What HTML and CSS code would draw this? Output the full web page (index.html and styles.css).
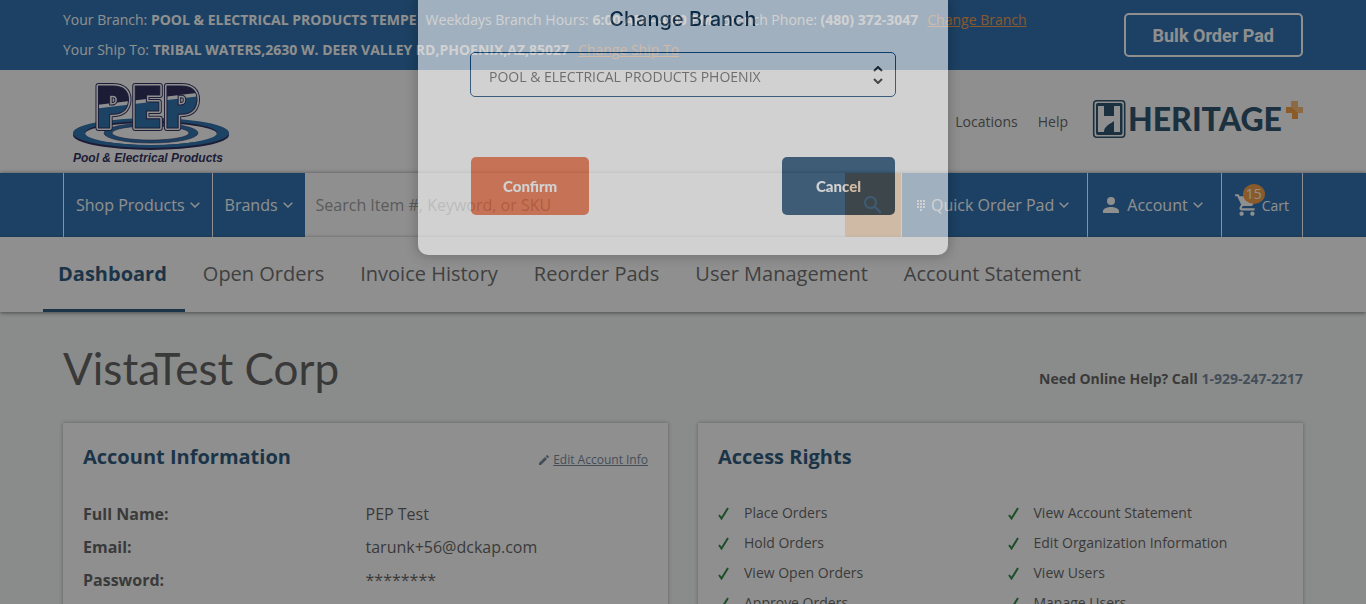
FILE: index.html
```html
<!DOCTYPE html>
<html lang="en">
<head>
<meta charset="utf-8">
<meta name="viewport" content="width=device-width, initial-scale=1">
<title>Dashboard</title>
<link rel="stylesheet" href="styles.css">
</head>
<body>
<div class="page">
  <div class="topbar">
    <div class="container topbar-inner">
      <div class="branch-info">
        <p class="info-row"><span>Your Branch: <strong>POOL &amp; ELECTRICAL PRODUCTS TEMPE</strong></span><span>Weekdays Branch Hours: <strong>6:00 AM - 4:00 PM</strong></span><span>Branch Phone: <strong>(480) 372-3047</strong></span><a href="#">Change Branch</a></p>
        <p class="info-row"><span>Your Ship To: <strong>TRIBAL WATERS,2630 W. DEER VALLEY RD,PHOENIX,AZ,85027</strong></span><a href="#">Change Ship To</a></p>
      </div>
      <button class="bulk" type="button">Bulk Order Pad</button>
    </div>
  </div>

  <header class="header">
    <div class="container header-inner">
      <a class="logo" href="#" aria-label="Pool &amp; Electrical Products">
        <svg width="160" height="90" viewBox="0 0 160 90">
          <defs>
            <linearGradient id="pep" gradientUnits="userSpaceOnUse" x1="60" y1="0" x2="66" y2="50">
              <stop offset="0.46" stop-color="#00003c"/><stop offset="0.48" stop-color="#fff"/>
              <stop offset="0.53" stop-color="#fff"/><stop offset="0.55" stop-color="#0054a0"/>
            </linearGradient>
          </defs>
          <path fill-rule="evenodd" fill="#00003c" d="M2 58a78 15 0 1 0 156 0a78 15 0 1 0-156 0zM14 57a66 11 0 1 0 132 0a66 11 0 1 0-132 0z"/>
          <path fill-rule="evenodd" fill="#0054a0" d="M2 56a78 15 0 1 0 156 0a78 15 0 1 0-156 0zM14 56a66 12 0 1 0 132 0a66 12 0 1 0-132 0z"/>
          <path fill-rule="evenodd" fill="#0054a0" stroke="#00003c" stroke-width="0.6" d="M33 56a47 10 0 1 0 94 0a47 10 0 1 0-94 0zM41 56a38 7 0 1 0 77 0a38 7 0 1 0-77 0z"/>
          <text class="pep-outer" x="23" y="51">PEP</text>
          <text class="pep-mid" x="23" y="51">PEP</text>
          <text class="pep-inner" x="23" y="51">PEP</text>
          <text class="pep-tag" x="2" y="85">Pool &amp; Electrical Products</text>
        </svg>
      </a>
      <nav class="header-links">
        <a href="#">Locations</a>
        <a href="#">Help</a>
        <a class="heritage" href="#" aria-label="Heritage Plus">
          <svg width="210" height="40" viewBox="0 0 210 40">
            <rect x="0.7" y="0.7" width="31" height="36.600" rx="3" fill="#fff" stroke="#003050" stroke-width="1.6"/>
            <rect x="3" y="3" width="26.500" height="32" rx="2" fill="#003050"/>
            <path fill="#fff" d="M5 6h6v10h10V6h6v26h-6V22c-4 1-8 4-9 10H5z"/>
            <path fill="#003050" d="M11 32c0-3 1-4 2-5c2-3 5-3 8-6v11z"/>
            <text class="heritage-text" x="35" y="31">HERITAGE</text>
            <path fill="#f3891c" d="M198 1h7v6h5v6h-5v6h-6v-6h-6V7h5z"/>
            <path fill="#fabd74" opacity="0.7" d="M198 1h7v6h5v6h-5l-7-6z"/>
          </svg>
        </a>
      </nav>
    </div>
  </header>

  <div class="navbar">
    <div class="container nav-inner">
      <a class="nav-item" href="#">Shop Products <svg class="chev" viewBox="0 0 10 7"><path d="M.7 1.200l4.300 4.300 4.300-4.300"/></svg></a>
      <a class="nav-item" href="#">Brands <svg class="chev" viewBox="0 0 10 7"><path d="M.7 1.200l4.300 4.300 4.300-4.300"/></svg></a>
      <form class="search">
        <input type="text" aria-label="Search" placeholder="Search Item #, Keyword, or SKU">
        <button type="button" aria-label="Search"><svg width="24" height="24" viewBox="0 0 24 24"><path fill="#fff" d="M15.500 14h-.79l-.28-.27A6.470 6.470 0 0 0 16 9.500 6.500 6.500 0 1 0 9.500 16c1.610 0 3.090-.59 4.230-1.570l.27.28v.79l5 4.990L20.490 19l-4.990-5zm-6 0C7.010 14 5 11.990 5 9.500S7.010 5 9.500 5 14 7.010 14 9.500 11.990 14 9.500 14z"/></svg></button>
      </form>
      <a class="nav-item wide" href="#"><svg class="dots" viewBox="0 0 8 11"><path fill="#fff" d="M0 0h2v2H0zM3 0h2v2H3zM6 0h2v2H6zM0 3h2v2H0zM3 3h2v2H3zM6 3h2v2H6zM0 6h2v2H0zM3 6h2v2H3zM6 6h2v2H6zM3 9h2v2H3z"/></svg>Quick Order Pad <svg class="chev" viewBox="0 0 10 7"><path d="M.7 1.200l4.300 4.300 4.300-4.300"/></svg></a>
      <a class="nav-item wide" href="#"><svg class="person" viewBox="0 0 16 16"><path fill="#fff" d="M8 8a4 4 0 1 0 0-8 4 4 0 0 0 0 8zm0 2c-2.700 0-8 1.300-8 4v2h16v-2c0-2.700-5.300-4-8-4z"/></svg>Account <svg class="chev" viewBox="0 0 10 7"><path d="M.7 1.200l4.300 4.300 4.300-4.300"/></svg></a>
      <a class="nav-item cart" href="#"><span class="cart-icon"><svg width="26" height="26" viewBox="0 0 24 24"><path fill="#fff" d="M7 18c-1.100 0-1.990.9-1.990 2S5.900 22 7 22s2-.9 2-2-.9-2-2-2zM1 2v2h2l3.600 7.590-1.350 2.450c-.16.28-.25.61-.25.96 0 1.100.9 2 2 2h12v-2H7.420c-.14 0-.25-.11-.25-.25l.03-.12.900-1.630h7.450c.75 0 1.410-.41 1.750-1.030l3.580-6.490A1 1 0 0 0 20 4H5.210l-.94-2H1zm16 16c-1.100 0-1.990.9-1.990 2s.89 2 1.990 2 2-.9 2-2-.9-2-2-2z"/></svg><span class="badge">15</span></span>Cart</a>
    </div>
  </div>

  <nav class="tabs">
    <div class="container tabs-inner">
      <a class="tab active" href="#">Dashboard</a>
      <a class="tab" href="#">Open Orders</a>
      <a class="tab" href="#">Invoice History</a>
      <a class="tab" href="#">Reorder Pads</a>
      <a class="tab" href="#">User Management</a>
      <a class="tab" href="#">Account Statement</a>
    </div>
  </nav>

  <main class="container">
    <div class="title-row">
      <h1>VistaTest Corp</h1>
      <p class="help">Need Online Help? Call <a href="#">1-929-247-2217</a></p>
    </div>
    <div class="cards">
      <section class="card">
        <div class="card-head">
          <h2>Account Information</h2>
          <a class="edit" href="#"><svg width="10" height="10" viewBox="0 0 10 10"><path fill="#5a7088" d="M0 8v2h2l6-6-2-2zM6.700 1.300l2 2L9.800 2.200a.6.6 0 0 0 0-.8L8.600.2a.6.6 0 0 0-.8 0z"/></svg><span>Edit Account Info</span></a>
        </div>
        <dl class="details">
          <dt>Full Name:</dt><dd>PEP Test</dd>
          <dt>Email:</dt><dd>tarunk+56@dckap.com</dd>
          <dt>Password:</dt><dd>********</dd>
        </dl>
      </section>
      <section class="card">
        <div class="card-head"><h2>Access Rights</h2></div>
        <ul class="rights">
          <li><svg class="tick" viewBox="0 0 11 13"><path d="M1 8l2.500 3.500L10 1"/></svg>Place Orders</li>
          <li><svg class="tick" viewBox="0 0 11 13"><path d="M1 8l2.500 3.500L10 1"/></svg>View Account Statement</li>
          <li><svg class="tick" viewBox="0 0 11 13"><path d="M1 8l2.500 3.500L10 1"/></svg>Hold Orders</li>
          <li><svg class="tick" viewBox="0 0 11 13"><path d="M1 8l2.500 3.500L10 1"/></svg>Edit Organization Information</li>
          <li><svg class="tick" viewBox="0 0 11 13"><path d="M1 8l2.500 3.500L10 1"/></svg>View Open Orders</li>
          <li><svg class="tick" viewBox="0 0 11 13"><path d="M1 8l2.500 3.500L10 1"/></svg>View Users</li>
          <li><svg class="tick" viewBox="0 0 11 13"><path d="M1 8l2.500 3.500L10 1"/></svg>Approve Orders</li>
          <li><svg class="tick" viewBox="0 0 11 13"><path d="M1 8l2.500 3.500L10 1"/></svg>Manage Users</li>
        </ul>
      </section>
    </div>
  </main>
</div>

<div class="overlay"></div>
<div class="modal-wrap">
  <div class="modal" role="dialog" aria-labelledby="modal-title">
    <h2 class="modal-title" id="modal-title">Change Branch</h2>
    <div class="select-box">
      <select aria-label="Branch"><option>POOL &amp; ELECTRICAL PRODUCTS PHOENIX</option></select>
      <svg class="updown" viewBox="0 0 10 18"><path d="M1 5l4-4 4 4M1 13l4 4 4-4"/></svg>
    </div>
    <div class="modal-actions">
      <button class="btn confirm" type="button">Confirm</button>
      <button class="btn cancel" type="button">Cancel</button>
    </div>
  </div>
</div>
</body>
</html>
```

FILE: styles.css
```css
* { box-sizing: border-box; }
body {
  margin: 0;
  font-family: "Open Sans", "Noto Sans", sans-serif;
  font-size: 14px;
  color: #444;
  background: #f4f8f5;
}
.page { height: 100vh; overflow: hidden; }
a { color: inherit; text-decoration: none; }
h1, h2, p, ul, dl, dd { margin: 0; padding: 0; }
button, input, select { font-family: inherit; }
.container { max-width: 1240px; margin: 0 auto; }

.topbar { background: #0053a0; color: #fff; }
.topbar-inner { display: flex; justify-content: space-between; align-items: center; padding: 5px 0; }
.info-row { display: flex; gap: 9px; line-height: 30px; white-space: nowrap; }
.info-row a { color: #f38626; text-decoration: underline; }
.bulk {
  padding: 0 27px;
  height: 44px;
  border: 2px solid #fff;
  border-radius: 5px;
  background: transparent;
  color: #fff;
  font: 700 18px Roboto, sans-serif;
}

.header { background: #fff; }
.header-inner { display: flex; justify-content: space-between; align-items: center; height: 103px; }
.logo { margin-left: 8px; }
.logo svg, .heritage svg { display: block; overflow: visible; }
.pep-outer, .pep-mid, .pep-inner { font: 800 58px "Open Sans", sans-serif; stroke-linejoin: round; }
.pep-outer { fill: #00003c; stroke: #00003c; stroke-width: 6px; }
.pep-mid { fill: #fff; stroke: #fff; stroke-width: 4px; }
.pep-inner { fill: url(#pep); stroke: #00003c; stroke-width: 1px; }
.pep-tag { font: italic 700 12px "Liberation Sans", Arial, sans-serif; fill: #00003c; }
.heritage-text { font: 900 32px Lato, sans-serif; fill: #003050; }
.header-links { display: flex; align-items: center; gap: 20px; }
.heritage { margin-left: 5px; margin-top: -4px; }

.navbar { position: relative; background: #0053a0; box-shadow: 0 0 4px rgba(0, 0, 0, 0.5); }
.nav-inner { display: flex; height: 64px; }
.nav-item {
  display: flex;
  align-items: center;
  padding: 0 12px;
  border-left: 1px solid #fff;
  color: #fff;
  font-size: 16px;
  white-space: nowrap;
}
.nav-item.wide { padding: 0 18px 0 15px; }
.nav-item.cart { padding: 0 13px 0 12px; border-right: 1px solid #fff; font-size: 14px; }
.chev { width: 10px; height: 8px; margin-left: 5px; fill: none; stroke: #fff; stroke-width: 1.5; }
.dots { width: 8px; height: 11px; margin-right: 6px; }
.person { width: 16px; height: 16px; margin-right: 8px; }
.cart-icon { position: relative; display: flex; margin-right: 2px; }
.badge {
  position: absolute;
  left: 9px;
  top: -8px;
  width: 22px;
  line-height: 20px;
  border-radius: 50%;
  background: #f38b1e;
  text-align: center;
}
.search { flex: 1; display: flex; min-width: 0; background: #fff; }
.search input {
  flex: 1;
  min-width: 0;
  border: 0;
  padding: 0 11px;
  background: transparent;
  font-size: 16px;
}
.search input::placeholder { color: #8c8c8c; opacity: 1; }
.search button { width: 56px; border: 0; padding: 0; background: #f38b1e; }
.search svg { display: block; margin: 0 auto; }

.tabs { position: relative; background: #fff; box-shadow: 0 1px 4px rgba(0, 0, 0, 0.6); }
.tabs-inner { display: flex; }
.tab { padding: 23px 18px 22px; line-height: 27px; border-bottom: 3px solid transparent; font-size: 20px; color: #505050; white-space: nowrap; }
.tab.active { margin-left: -20px; padding-left: 15px; border-color: #003562; color: #003562; font-weight: 700; }

.title-row { display: flex; justify-content: space-between; align-items: center; height: 111px; padding-top: 1px; }
h1 { font: 400 44px Lato, sans-serif; color: #424242; }
.help { padding-top: 20px; font-weight: 700; }
.help a { color: #5a7088; }
.cards { display: grid; grid-template-columns: 1fr 1fr; gap: 30px; }
.card { min-height: 300px; padding: 20px; background: #fff; box-shadow: 0 0 4px rgba(0, 0, 0, 0.4); }
.card-head { display: flex; justify-content: space-between; align-items: center; }
.card h2 { font-size: 20px; line-height: 28px; font-weight: 700; color: #003562; }
.edit { display: flex; gap: 4px; align-items: center; padding-top: 5px; font-size: 12px; color: #5a7088; }
.edit span { text-decoration: underline; }
.details { display: grid; grid-template-columns: 1fr 1fr; margin-top: 27px; font-size: 16px; line-height: 33px; }
.details dt { font-weight: 700; }
.rights { display: grid; grid-template-columns: 1fr 1fr; column-gap: 14px; margin-top: 27px; list-style: none; line-height: 30px; }
.rights li { display: flex; align-items: center; gap: 15px; }
.tick { width: 11px; height: 13px; fill: none; stroke: #006f1c; stroke-width: 2; }

.overlay { position: fixed; inset: 0; background: rgba(51, 51, 51, 0.55); }
.modal-wrap { position: fixed; inset: 0; display: flex; justify-content: center; align-items: flex-start; }
.modal {
  width: 530px;
  padding: 4px 52px 40px;
  border-radius: 0 0 10px 10px;
  background: #fff;
  box-shadow: 0 0 12px 2px rgba(0, 0, 0, 0.35);
  opacity: 0.58;
}
.modal-title { font: 500 20px/30px Inter, sans-serif; text-align: center; color: #00182c; }
.select-box { position: relative; margin-top: 18px; }
.select-box select {
  appearance: none;
  display: block;
  width: 100%;
  height: 45px;
  padding: 4px 18px 0;
  border: 1px solid #003a70;
  border-radius: 5px;
  background: transparent;
  color: #555;
  font-size: 14px;
}
.updown { position: absolute; right: 13px; top: 14px; width: 10px; height: 18px; fill: none; stroke: #111; stroke-width: 2; pointer-events: none; }
.modal-actions { display: flex; justify-content: space-between; margin: 60px 1px 0; }
.btn { height: 58px; padding: 0 32px; border: 0; border-radius: 5px; color: #fff; font: 900 15px Lato, sans-serif; }
.confirm { background: #ec5d2d; }
.cancel { padding: 0 34px; background: #053764; }
```
